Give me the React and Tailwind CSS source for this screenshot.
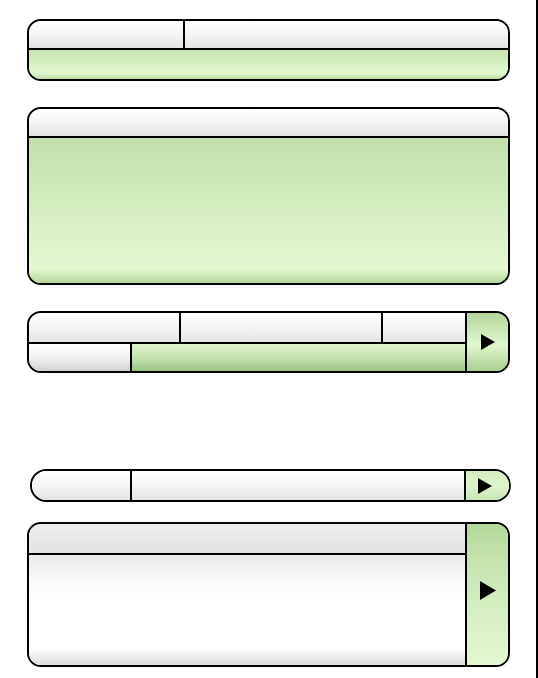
import React from 'react';

const gloss = 'bg-[linear-gradient(to_bottom,#ffffff_0%,#f6f6f6_45%,#e4e4e4_100%)]';
const greenBody = 'bg-[linear-gradient(to_bottom,#c3dfab_0%,#d4edbf_45%,#e3f8d1_90%,#b7d79d_100%)]';

const Play = ({ w = 16, h = 18 }) => (
  <svg width={w} height={h} viewBox={`0 0 ${w} ${h}`}>
    <polygon points={`1,1 ${w - 1},${h / 2} 1,${h - 1}`} fill="#000" />
  </svg>
);

export default function App() {
  return (
    <div className="w-[538px] h-[678px] bg-white border-r-2 border-black pt-[19px] font-['Liberation_Sans',sans-serif]">
      {/* panel 1 */}
      <div className="ml-[27px] w-[483px] h-[62px] border-2 border-black rounded-[14px] overflow-hidden flex flex-col">
        <div className={`h-[29px] border-b-2 border-black flex ${gloss}`}>
          <div className="w-[156px] border-r-2 border-black" />
          <div className="flex-1" />
        </div>
        <div className="flex-1 bg-[linear-gradient(to_bottom,#c8e4b1_0%,#d8f0c4_50%,#e1f8cf_80%,#b9d99f_100%)]" />
      </div>

      {/* panel 2 */}
      <div className="mt-[26px] ml-[27px] w-[483px] h-[178px] border-2 border-black rounded-[14px] overflow-hidden flex flex-col">
        <div className={`h-[29px] border-b-2 border-black ${gloss}`} />
        <div className={`flex-1 ${greenBody}`} />
      </div>

      {/* panel 3 */}
      <div className="mt-[26px] ml-[27px] w-[483px] h-[62px] border-2 border-black rounded-[14px] overflow-hidden flex">
        <div className="flex-1 flex flex-col">
          <div className={`h-[31px] border-b-2 border-black flex ${gloss}`}>
            <div className="w-[152px] border-r-2 border-black" />
            <div className="w-[202px] border-r-2 border-black" />
            <div className="flex-1" />
          </div>
          <div className="flex-1 flex">
            <div className="w-[103px] border-r-2 border-black bg-[linear-gradient(to_bottom,#ffffff_0%,#f2f2f2_50%,#d2d2d2_100%)]" />
            <div className="flex-1 bg-[linear-gradient(to_bottom,#e0f5ce_0%,#c2e0aa_55%,#98c383_100%)]" />
          </div>
        </div>
        <div className="w-[43px] border-l-2 border-black flex items-center justify-center bg-[linear-gradient(to_bottom,#b2d698_0%,#d4eec0_40%,#e1f6cd_55%,#c4e2ac_80%,#a9cf8e_100%)]">
          <Play w={16} h={18} />
        </div>
      </div>

      {/* panel 4 */}
      <div className="mt-[96px] ml-[30px] w-[481px] h-[33px] border-2 border-black rounded-full overflow-hidden flex">
        <div className={`w-[100px] border-r-2 border-black ${gloss}`} />
        <div className={`flex-1 ${gloss}`} />
        <div className="w-[45px] border-l-2 border-black flex items-center justify-center pr-[6px] bg-[linear-gradient(to_bottom,#d3ecbf_0%,#dff4cc_50%,#c9e6b2_100%)]">
          <Play w={16} h={18} />
        </div>
      </div>

      {/* panel 5 */}
      <div className="mt-[20px] ml-[27px] w-[483px] h-[145px] border-2 border-black rounded-[14px] overflow-hidden flex">
        <div className="flex-1 flex flex-col">
          <div className="h-[31px] border-b-2 border-black bg-[linear-gradient(to_bottom,#f0f0f0_0%,#e8e8e8_50%,#e3e3e3_100%)]" />
          <div className="flex-1 bg-[linear-gradient(to_bottom,#ececec_0%,#fafafa_25%,#ffffff_40%,#ffffff_85%,#dcdcdc_100%)]" />
        </div>
        <div className="w-[43px] border-l-2 border-black flex items-center justify-center pb-[8px] bg-[linear-gradient(to_bottom,#b3d899_0%,#c8e5b1_30%,#d8f0c4_65%,#e3f8d1_100%)]">
          <Play w={18} h={21} />
        </div>
      </div>
    </div>
  );
}
